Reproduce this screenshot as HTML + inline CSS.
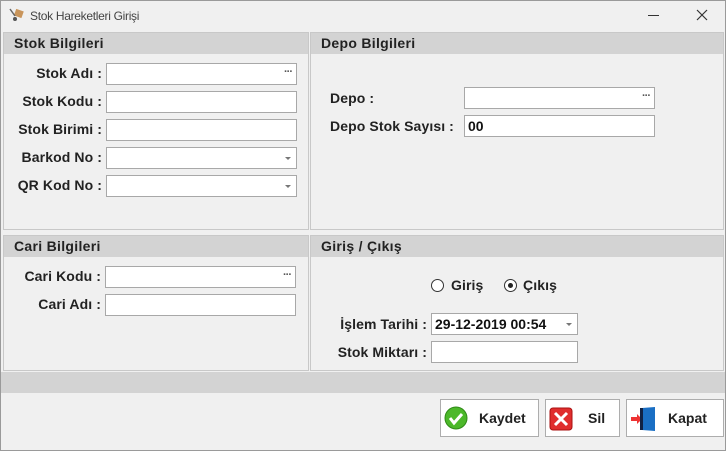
<!DOCTYPE html>
<html><head><meta charset="utf-8"><style>
*{margin:0;padding:0;box-sizing:border-box}
body{width:726px;height:451px;background:#f0f0f0;font-family:"Liberation Sans",Arial,sans-serif;position:relative;overflow:hidden}
.a{position:absolute}
.win{left:0;top:0;width:726px;height:451px;border:1px solid #9a9a9a}
.title{left:30px;top:9px;font-size:12px;color:#444;letter-spacing:-0.3px}
.panel{position:absolute;border:1px solid #c8c8c8;background:#f0f0f0}
.hdr{position:absolute;left:0;top:0;right:0;height:21px;background:#d3d3d3;font-weight:bold;font-size:14px;letter-spacing:0.3px;color:#222;padding:2px 0 0 10px}
.lbl{position:absolute;font-weight:bold;font-size:14px;letter-spacing:0.1px;color:#222;text-align:right;white-space:nowrap}
.inp{position:absolute;height:22px;background:#fff;border:1px solid #a8a8a8;font-size:14px;font-weight:bold;padding:2px 3px;color:#111}
.dots{position:absolute;right:4px;top:2px;font-size:11px;color:#555;letter-spacing:-1px}
.arr{position:absolute;right:5px;top:9px;width:0;height:0;border-left:3px solid transparent;border-right:3px solid transparent;border-top:3px solid #777}
.btn{position:absolute;background:#fff;border:1px solid #adadad;font-weight:bold;font-size:14px;color:#222}
.radio{position:absolute;width:13px;height:13px;border:1px solid #333;border-radius:50%;background:#fff}
</style></head><body>
<div class="a win"></div>
<svg class="a" style="left:9px;top:7px" width="18" height="16" viewBox="0 0 18 16"><rect x="6" y="3" width="8" height="7" fill="#c9955b" transform="rotate(20 10 6)"/><path d="M1 2 L6 9" stroke="#666" stroke-width="1.5"/><circle cx="6" cy="12" r="2" fill="#555"/></svg>
<div class="a title">Stok Hareketleri Girişi</div>
<div class="a" style="left:648px;top:15px;width:11px;height:1px;background:#333"></div>
<svg class="a" style="left:696px;top:9px" width="12" height="12"><path d="M1 1L11 11M11 1L1 11" stroke="#333" stroke-width="1.2"/></svg>

<div class="panel" style="left:3px;top:32px;width:306px;height:198px"><div class="hdr">Stok Bilgileri</div></div>
<div class="panel" style="left:310px;top:32px;width:414px;height:198px"><div class="hdr">Depo Bilgileri</div></div>
<div class="panel" style="left:3px;top:235px;width:306px;height:136px"><div class="hdr">Cari Bilgileri</div></div>
<div class="panel" style="left:310px;top:235px;width:414px;height:136px"><div class="hdr">Giriş / Çıkış</div></div>

<div class="lbl" style="left:0;width:102px;top:65px">Stok Adı :</div>
<div class="inp" style="left:106px;top:63px;width:191px"><span class="dots">···</span></div>
<div class="lbl" style="left:0;width:102px;top:93px">Stok Kodu :</div>
<div class="inp" style="left:106px;top:91px;width:191px"></div>
<div class="lbl" style="left:0;width:102px;top:121px">Stok Birimi :</div>
<div class="inp" style="left:106px;top:119px;width:191px"></div>
<div class="lbl" style="left:0;width:102px;top:149px">Barkod No :</div>
<div class="inp" style="left:106px;top:147px;width:191px"><span class="arr"></span></div>
<div class="lbl" style="left:0;width:102px;top:177px">QR Kod No :</div>
<div class="inp" style="left:106px;top:175px;width:191px"><span class="arr"></span></div>

<div class="lbl" style="left:330px;top:90px;text-align:left">Depo :</div>
<div class="inp" style="left:464px;top:87px;width:191px"><span class="dots">···</span></div>
<div class="lbl" style="left:330px;top:118px;text-align:left">Depo Stok Sayısı :</div>
<div class="inp" style="left:464px;top:115px;width:191px">00</div>

<div class="lbl" style="left:0;width:101px;top:268px">Cari Kodu :</div>
<div class="inp" style="left:105px;top:266px;width:191px"><span class="dots">···</span></div>
<div class="lbl" style="left:0;width:101px;top:296px">Cari Adı :</div>
<div class="inp" style="left:105px;top:294px;width:191px"></div>

<div class="radio" style="left:431px;top:279px"></div>
<div class="lbl" style="left:451px;top:277px">Giriş</div>
<div class="radio" style="left:504px;top:279px"><div style="position:absolute;left:3px;top:3px;width:5px;height:5px;border-radius:50%;background:#222"></div></div>
<div class="lbl" style="left:523px;top:277px">Çıkış</div>

<div class="lbl" style="left:300px;width:127px;top:316px">İşlem Tarihi :</div>
<div class="inp" style="left:431px;top:313px;width:147px">29-12-2019 00:54<span class="arr"></span></div>
<div class="lbl" style="left:300px;width:127px;top:344px">Stok Miktarı :</div>
<div class="inp" style="left:431px;top:341px;width:147px"></div>

<div class="a" style="left:1px;top:372px;width:724px;height:21px;background:#d3d3d3"></div>

<div class="btn" style="left:440px;top:399px;width:99px;height:38px">
<svg class="a" style="left:3px;top:6px" width="24" height="24"><circle cx="12" cy="12" r="11" fill="#4cb82a" stroke="#2f8a17"/><path d="M6 12l4 5 8-9" stroke="#fff" stroke-width="3" fill="none"/></svg>
<span class="a" style="left:38px;top:10px">Kaydet</span></div>
<div class="btn" style="left:545px;top:399px;width:75px;height:38px">
<svg class="a" style="left:3px;top:7px" width="24" height="24"><rect x="1" y="1" width="22" height="22" rx="3" fill="#e02d2d" stroke="#a11"/><path d="M6 6l12 12M18 6L6 18" stroke="#fff" stroke-width="3"/></svg>
<span class="a" style="left:42px;top:10px">Sil</span></div>
<div class="btn" style="left:626px;top:399px;width:98px;height:38px">
<svg class="a" style="left:2px;top:6px" width="28" height="26"><path d="M2 11h6v-3l5 5-5 5v-3H2z" fill="#e33"/><path d="M13 2l13 -1v24l-13-1z" fill="#1a6fc4"/><rect x="11" y="2" width="3" height="22" fill="#124"/></svg>
<span class="a" style="left:41px;top:10px">Kapat</span></div>
</body></html>
